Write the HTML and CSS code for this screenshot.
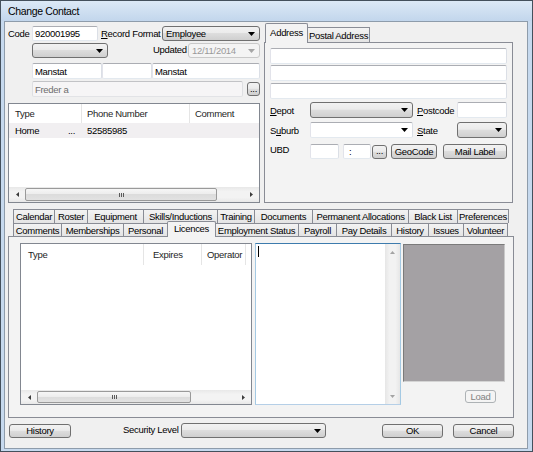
FILE: index.html
```html
<!DOCTYPE html>
<html>
<head>
<meta charset="utf-8">
<title>Change Contact</title>
<link rel="stylesheet" href="styles.css">
</head>
<body>
<div class="window">
  <div class="titlebar">Change Contact</div>
  <div class="client">
    <div class="top">
      <div class="left">
        <div class="row r1">
          <span class="lbl l-code">Code</span>
          <div class="tb w66">920001995</div>
          <span class="lbl l-rf"><u>R</u>ecord Format</span>
          <div class="dd w98"><span class="ddt">Employee</span><svg class="arr" width="7" height="4" viewBox="0 0 7 4"><path d="M0 0h7L3.5 4z"/></svg></div>
        </div>
        <div class="row r2">
          <div class="dd w76 ind"><span class="ddt"></span><svg class="arr" width="7" height="4" viewBox="0 0 7 4"><path d="M0 0h7L3.5 4z"/></svg></div>
          <span class="lbl l-upd">Updated</span>
          <div class="dd dis w72"><span class="ddt">12/11/2014</span><svg class="arr" width="7" height="4" viewBox="0 0 7 4"><path d="M0 0h7L3.5 4z"/></svg></div>
        </div>
        <div class="row r3">
          <div class="tb w70 ind">Manstat</div>
          <div class="tb w50"></div>
          <div class="tb w108">Manstat</div>
        </div>
        <div class="row r4">
          <div class="tb tbdis w211 ind">Freder a</div>
          <div class="btn ell">...</div>
        </div>
        <div class="lv phones">
          <div class="lvh">
            <span class="col pc-type">Type</span>
            <span class="col pc-phone">Phone Number</span>
            <span class="col pc-comment">Comment</span>
          </div>
          <div class="lvr sel">
            <span class="col pc-type split"><span>Home</span><span>...</span></span>
            <span class="col pc-phone">52585985</span>
            <span class="col pc-comment"></span>
          </div>
          <div class="hscroll">
            <span class="sbtn"><svg width="3" height="5" viewBox="0 0 3 5"><path d="M3 0v5L0 2.5z"/></svg></span>
            <span class="thumb pthumb"><svg width="5" height="4" viewBox="0 0 5 4"><path d="M0 0h1v4H0zM2 0h1v4H2zM4 0h1v4H4z"/></svg></span>
            <span class="strack"></span>
            <span class="sbtn"><svg width="3" height="5" viewBox="0 0 3 5"><path d="M0 0v5L3 2.5z"/></svg></span>
          </div>
        </div>
      </div>
      <div class="addr">
        <div class="tabstrip">
          <div class="tab active t-addr">Address</div>
          <div class="tab t-postal">Postal Address</div>
        </div>
        <div class="addr-panel">
          <div class="tb w237 h16"></div>
          <div class="tb w237 h16 m1"></div>
          <div class="tb w237 h16 m2"></div>
          <div class="arow ar-depot">
            <span class="lbl al"><u>D</u>epot</span>
            <div class="dd w103"><span class="ddt"></span><svg class="arr" width="7" height="4" viewBox="0 0 7 4"><path d="M0 0h7L3.5 4z"/></svg></div>
            <span class="lbl al2"><u>P</u>ostcode</span>
            <div class="tb w50"></div>
          </div>
          <div class="arow ar-suburb">
            <span class="lbl al">S<u>u</u>burb</span>
            <div class="dd combo w103"><span class="ddt"></span><svg class="arr" width="7" height="4" viewBox="0 0 7 4"><path d="M0 0h7L3.5 4z"/></svg></div>
            <span class="lbl al2"><u>S</u>tate</span>
            <div class="dd w50"><span class="ddt"></span><svg class="arr" width="7" height="4" viewBox="0 0 7 4"><path d="M0 0h7L3.5 4z"/></svg></div>
          </div>
          <div class="arow ar-ubd">
            <span class="lbl al lup">UBD</span>
            <div class="tb w29"></div>
            <div class="tb w28 colon">:</div>
            <div class="btn ell2">...</div>
            <div class="btn geo">GeoCode</div>
            <div class="btn mail">Mail Label</div>
          </div>
        </div>
      </div>
    </div>

    <div class="lower">
      <div class="trow trow1">
        <div class="tab w41">Calendar</div>
        <div class="tab w33">Roster</div>
        <div class="tab w56">Equipment</div>
        <div class="tab w74">Skills/Inductions</div>
        <div class="tab w37">Training</div>
        <div class="tab w58">Documents</div>
        <div class="tab w96">Permanent Allocations</div>
        <div class="tab w49">Black List</div>
        <div class="tab w52 last">Preferences</div>
      </div>
      <div class="trow trow2">
        <div class="tab w48">Comments</div>
        <div class="tab w62">Memberships</div>
        <div class="tab w44">Personal</div>
        <div class="tab active t-lic w49">Licences</div>
        <div class="tab w83">Employment Status</div>
        <div class="tab w38">Payroll</div>
        <div class="tab w55">Pay Details</div>
        <div class="tab w37">History</div>
        <div class="tab w35">Issues</div>
        <div class="tab w45 last">Volunteer</div>
      </div>
      <div class="lpanel">
        <div class="lv lic">
          <div class="lvh lich">
            <span class="col lc-type">Type</span>
            <span class="col lc-exp">Expires</span>
            <span class="col lc-op">Operator</span>
            <span class="col lc-rest"></span>
          </div>
          <div class="hscroll lscroll">
            <span class="sbtn"><svg width="3" height="5" viewBox="0 0 3 5"><path d="M3 0v5L0 2.5z"/></svg></span>
            <span class="thumb lthumb"><svg width="5" height="4" viewBox="0 0 5 4"><path d="M0 0h1v4H0zM2 0h1v4H2zM4 0h1v4H4z"/></svg></span>
            <span class="strack"></span>
            <span class="sbtn"><svg width="3" height="5" viewBox="0 0 3 5"><path d="M0 0v5L3 2.5z"/></svg></span>
          </div>
        </div>
        <div class="memo">
          <span class="caret"></span>
          <div class="vscroll">
            <span class="vbtn"><svg width="5" height="3" viewBox="0 0 5 3"><path d="M0 3h5L2.5 0z"/></svg></span>
            <span class="vbtn"><svg width="5" height="3" viewBox="0 0 5 3"><path d="M0 0h5L2.5 3z"/></svg></span>
          </div>
        </div>
        <div class="rcol">
          <div class="picture"></div>
          <div class="btn load">Load</div>
        </div>
      </div>
    </div>

    <div class="footer">
      <div class="btn hist">History</div>
      <span class="lbl seclbl">Security Level</span>
      <div class="dd w145"><span class="ddt"></span><svg class="arr" width="7" height="4" viewBox="0 0 7 4"><path d="M0 0h7L3.5 4z"/></svg></div>
      <div class="btn okb">OK</div>
      <div class="btn cancelb">Cancel</div>
    </div>
  </div>
</div>
</body>
</html>
```

FILE: styles.css
```css
* { box-sizing: border-box; }
html, body { margin: 0; padding: 0; background: #ffffff; }
body {
  font-family: "Liberation Sans", Arial, sans-serif;
  font-size: 9.5px;
  letter-spacing: -0.3px;
  color: #000;
}
u { text-decoration: underline; text-underline-offset: 1px; }

.window {
  width: 533px; height: 452px;
  border: 1px solid #44505c;
  background: #c6d9ee;
  display: flex; flex-direction: column;
}
.titlebar {
  flex: none; height: 20px;
  padding-left: 7px;
  display: flex; align-items: center;
  font-size: 10.5px;
  letter-spacing: -0.35px;
  background: linear-gradient(#dce9f6, #c2d6ec);
}
.client {
  flex: none;
  width: 524px; height: 428px;
  margin-left: 3px;
  border: 1px solid #8e9cab;
  background: #f0f0f0;
  display: flex; flex-direction: column;
}

/* ---------- top area ---------- */
.top { flex: none; display: flex; height: 181px; }
.left { flex: none; width: 259px; padding: 4px 0 0 3px; }
.row { display: flex; align-items: center; }
.r1 { height: 15px; }
.r2 { height: 15px; margin-top: 2px; }
.r3 { height: 16px; margin-top: 5px; }
.r4 { height: 16px; margin-top: 2px; }
.lbl { flex: none; white-space: nowrap; }
.l-code { width: 24px; }
.l-rf { width: 61px; margin-left: 3px; }
.l-upd { width: 35px; margin-left: 45px; margin-top: -2px; }
.ind { margin-left: 24px; }

.tb {
  flex: none; height: 100%;
  background: #fff;
  border: 1px solid;
  border-color: #abadb3 #dbdfe6 #e3e9ef #e2e3ea;
  border-radius: 2px;
  padding-left: 2px;
  display: flex; align-items: center;
  white-space: nowrap; overflow: hidden;
}
.tbdis { background: #f6f5f6; border-color: #c2c3c6 #dedfe2 #e2e3e6 #dedfe2; color: #6d6d6d; }
.h16 { height: 16px; }
.m1 { margin-top: 1px; }
.m2 { margin-top: 2px; }

.dd {
  flex: none; height: 100%;
  display: flex; align-items: center; justify-content: space-between;
  padding: 0 4px 0 3px;
  border: 1px solid #707070;
  border-radius: 3px;
  background: linear-gradient(#f2f2f2 0%, #ebebeb 45%, #dddddd 50%, #cfcfcf 100%);
  white-space: nowrap;
}
.dd .arr { fill: #000; flex: none; }
.dd.dis { background: #f4f4f4; border-color: #c9c9c9; color: #9a9a9a; }
.dd.dis .arr { fill: #a6a6a6; }
.dd.combo {
  background: #fff; border-radius: 2px;
  border-color: #abadb3 #dbdfe6 #e3e9ef #e2e3ea;
}

.btn {
  flex: none;
  display: flex; align-items: center; justify-content: center;
  border: 1px solid #707070;
  border-radius: 3px;
  background: linear-gradient(#f2f2f2 0%, #ebebeb 45%, #dddddd 50%, #cfcfcf 100%);
  white-space: nowrap;
}
.ell { width: 13px; height: 14px; margin-left: 4px; padding-bottom: 2px; }

.w28 { width: 28px; } .w29 { width: 29px; } .w50 { width: 50px; } .w66 { width: 66px; }
.w70 { width: 70px; } .w72 { width: 72px; } .w76 { width: 76px; } .w98 { width: 98px; }
.w103 { width: 103px; } .w108 { width: 108px; } .w145 { width: 145px; } .w211 { width: 211px; }
.w237 { width: 237px; }

/* list views */
.lv {
  flex: none;
  background: #fff;
  border: 1px solid #828790;
  display: flex; flex-direction: column;
}
.phones { width: 252px; height: 100px; margin-top: 6px; }
.lvh { flex: none; display: flex; height: 19px; }
.lvh .col {
  flex: none;
  display: flex; align-items: center;
  padding-left: 5px;
  border-right: 1px solid #e5e5e5;
  color: #1e1e1e;
  white-space: nowrap;
}
.lvr { flex: none; display: flex; height: 15px; background: #f1eff1; }
.lvr .col { flex: none; display: flex; align-items: center; padding-left: 5px; white-space: nowrap; }
.pc-type { width: 73px; padding-left: 6px !important; }
.pc-phone { width: 108px; }
.pc-comment { flex: 1 !important; border-right: none !important; }
.split { justify-content: space-between; padding-right: 7px; }

.hscroll {
  flex: none;
  margin-top: auto;
  height: 15px;
  display: flex; align-items: center;
  background: linear-gradient(#e8e8e8, #f3f3f3 30%, #f3f3f3 70%, #e8e8e8);
}
.sbtn { flex: none; width: 16px; height: 100%; display: flex; align-items: center; justify-content: center; }
.sbtn svg { fill: #3c3c3c; }
.thumb {
  flex: none; height: 13px;
  border: 1px solid #9a9a9a; border-radius: 2px;
  background: linear-gradient(#f6f6f6, #ececec 50%, #dcdcdc 50%, #e2e2e2);
  display: flex; align-items: center; justify-content: center;
}
.thumb svg { fill: #5a5a5a; }
.pthumb { width: 192px; }
.strack { flex: 1; }

/* address tab control */
.addr { flex: none; width: 249px; margin-top: 1px; display: flex; flex-direction: column; }
.tabstrip { flex: none; height: 19px; display: flex; align-items: flex-end; padding-left: 1px; }
.tab {
  flex: none;
  display: flex; align-items: center; justify-content: center;
  border: 1px solid #898c95; border-bottom: none; border-right: none;
  background: linear-gradient(#f3f3f3, #e4e4e4);
  white-space: nowrap; overflow: hidden;
}
.tab.active { background: #f3f3f3; position: relative; z-index: 1; border-right: 1px solid #898c95; }
.t-addr { width: 43px; height: 20px; margin-bottom: -1px; border-radius: 2px 2px 0 0; padding-bottom: 3px; }
.t-postal { width: 62px; height: 15px; border-left: none; border-right: 1px solid #898c95; }
.addr-panel {
  flex: none; height: 161px;
  border: 1px solid #898c95;
  background: #f3f3f3;
  padding: 5px 0 0 5px;
}
.arow { display: flex; align-items: center; height: 16px; }
.ar-depot { margin-top: 3px; }
.ar-suburb { margin-top: 4px; }
.ar-ubd { margin-top: 6px; height: 15px; }
.al { width: 40px; }
.al2 { width: 40px; margin-left: 4px; }
.lup { margin-top: -4px; }
.colon { margin-left: 4px; padding-left: 5px; }
.ell2 { width: 15px; height: 14px; margin-left: 1px; padding-bottom: 2px; }
.geo { width: 46px; height: 15px; margin-left: 4px; }
.mail { width: 64px; height: 15px; margin-left: 6px; }

/* lower tab control */
.lower { flex: none; width: 506px; margin: 6px 0 0 3px; }
.trow { display: flex; padding-left: 5px; }
.trow1 { height: 14px; }
.trow2 { height: 13px; align-items: flex-end; }
.trow2 .tab { height: 13px; }
.tab.last { border-right: 1px solid #898c95; }
.trow .tab.active.t-lic { height: 16px; margin-bottom: -1px; margin-right: -1px; border-radius: 2px 2px 0 0; padding-bottom: 3px; }
.t-lic + .tab { border-left: none; }
.w33 { width: 33px; } .w35 { width: 35px; } .w37 { width: 37px; } .w38 { width: 38px; }
.w41 { width: 41px; } .w44 { width: 44px; } .w45 { width: 45px; } .w48 { width: 48px; }
.w49 { width: 49px; } .w52 { width: 52px; } .w55 { width: 55px; } .w56 { width: 56px; }
.w58 { width: 58px; } .w62 { width: 62px; } .w74 { width: 74px; } .w83 { width: 83px; }
.w96 { width: 96px; }

.lpanel {
  height: 182px;
  border: 1px solid #898c95;
  background: #f3f3f3;
  display: flex;
  padding: 6px 0 0 11px;
}
.lic { width: 232px; height: 162px; }
.lich { height: 21px; }
.lc-type { width: 123px; padding-left: 7px !important; }
.lc-exp { width: 58px; padding-left: 9px !important; }
.lc-op { width: 44px; }
.lc-rest { flex: 1 !important; border-right: none !important; }
.lscroll { height: 14px; }
.lscroll .thumb { height: 12px; }
.lthumb { width: 154px; }

.memo {
  flex: none;
  width: 146px; height: 162px;
  margin-left: 3px;
  background: #fff;
  border: 1px solid;
  border-color: #3d7bad #a4c9e3 #b5cfe7 #a4c9e3;
  display: flex;
}
.caret { flex: none; width: 1px; height: 11px; margin: 2px 0 0 2px; background: #000; }
.vscroll {
  margin-left: auto;
  flex: none; width: 15px; height: 100%;
  display: flex; flex-direction: column; justify-content: space-between;
  background: linear-gradient(90deg, #e6e6e6, #f2f2f2 30%, #f2f2f2 70%, #e6e6e6);
}
.vbtn { height: 16px; display: flex; align-items: center; justify-content: center; }
.vbtn svg { fill: #a3a3a3; }

.rcol { flex: none; width: 102px; margin-left: 2px; display: flex; flex-direction: column; }
.picture {
  height: 138px; margin-top: 1px;
  background: #a4a1a4;
  border: 1px solid;
  border-color: #7a7a7a #c9c9c9 #d4d4d4 #7a7a7a;
}
.load {
  width: 31px; height: 13px;
  margin: 8px 0 0 62px;
  border-color: #adb2b5;
  background: #f4f4f4;
  color: #838383;
}

/* footer */
.footer { flex: none; display: flex; align-items: center; height: 15px; margin-top: 5px; padding-left: 4px; }
.hist { width: 62px; height: 14px; }
.seclbl { width: 58px; margin-left: 52px; margin-top: -2px; }
.okb { width: 61px; height: 14px; margin-left: 56px; }
.cancelb { width: 61px; height: 14px; margin-left: 10px; }
```
